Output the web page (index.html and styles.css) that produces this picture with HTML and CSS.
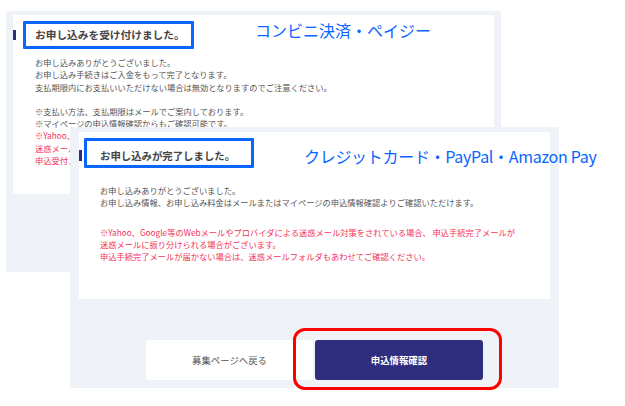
FILE: index.html
```html
<!DOCTYPE html>
<html lang="ja">
<head>
<meta charset="utf-8">
<title>お申し込み完了</title>
<link rel="stylesheet" href="styles.css">
</head>
<body>
<div class="canvas">
  <section class="window window-back">
    <div class="card">
      <h2 class="heading">お申し込みを受け付けました。</h2>
      <div class="body">
        <p class="para">お申し込みありがとうございました。<br>お申し込み手続きはご入金をもって完了となります。<br>支払期限内にお支払いいただけない場合は無効となりますのでご注意ください。</p>
        <p class="para gap-s">※支払い方法、支払期限はメールでご案内しております。<br>※マイページの申込情報確認からもご確認可能です。<br><span class="red">※Yahoo、Google等のWebメールやプロバイダによる迷惑メール対策をされている場合、申込受付メールが<br>迷惑メールに振り分けられる場合がございます。<br>申込受付メールが届かない場合は、迷惑メールフォルダもあわせてご確認ください。</span></p>
      </div>
    </div>
  </section>

  <section class="window window-front">
    <div class="card card-front">
      <h2 class="heading heading-front">お申し込みが完了しました。</h2>
      <div class="body body-front">
        <p class="para">お申し込みありがとうございました。<br>お申し込み情報、お申し込み料金はメールまたはマイページの申込情報確認よりご確認いただけます。</p>
        <p class="para red gap-l">※Yahoo、Google等のWebメールやプロバイダによる迷惑メール対策をされている場合、 申込手続完了メールが<br>迷惑メールに振り分けられる場合がございます。<br>申込手続完了メールが届かない場合は、迷惑メールフォルダもあわせてご確認ください。</p>
      </div>
    </div>
    <div class="actions">
      <button class="btn btn-back">募集ページへ戻る</button>
      <button class="btn btn-primary">申込情報確認</button>
    </div>
  </section>

  <div class="mark mark-1"></div>
  <div class="mark mark-2"></div>
  <div class="label label-1">コンビニ決済・ペイジー</div>
  <div class="label label-2">クレジットカード・PayPal・Amazon Pay</div>
  <div class="ring"></div>
</div>
</body>
</html>
```

FILE: styles.css
```css
* { box-sizing: border-box; }
html, body { margin: 0; padding: 0; background: #fff; }
body {
  font-family: "Noto Sans CJK JP", "Noto Sans", sans-serif;
  color: #555;
}
.canvas { position: relative; width: 625px; height: 406px; overflow: hidden; }

.window {
  position: absolute;
  background: #eff2f6;
  height: 261px;
}
.window-back { left: 6px; top: 11px; width: 495px; padding: 4px 7px 0; }
.window-front { left: 70px; top: 127px; width: 489px; padding: 5px 9px 0; }

.card { background: #fff; height: 179px; padding-top: 15px; }
.card-front { height: 167px; padding-top: 18px; }

.heading {
  margin: 0;
  border-left: 3px solid #2e2d7e;
  padding-left: 19px;
  font-size: 10.7px;
  line-height: 10px;
  height: 10px;
  font-weight: 700;
  color: #444;
  letter-spacing: 0;
  white-space: nowrap;
}
.heading-front { padding-left: 18px; font-size: 10.4px; height: 11px; line-height: 11px; }

.body { padding-left: 22px; margin-top: 16px; }
.body-front { padding-left: 21px; margin-top: 23px; }

.para {
  margin: 0;
  font-size: 8.25px;
  line-height: 12.3px;
  white-space: nowrap;
}
.gap-s { margin-top: 12px; }
.gap-l { margin-top: 17px; }
.red { color: #f5325a; }

.actions {
  display: flex;
  justify-content: center;
  gap: 2px;
  margin-top: 41px;
}
.btn {
  width: 167px;
  height: 40px;
  border: none;
  border-radius: 3px;
  font-family: "Noto Sans CJK JP", sans-serif;
  font-size: 9.4px;
  padding: 0;
}
.btn-back { background: #fff; color: #555; }
.btn-primary { width: 168px; background: #2e2d7e; color: #fff; font-weight: 700; }

.mark {
  position: absolute;
  border: 3px solid #0a66ff;
  border-radius: 1px;
}
.mark-1 { left: 23px; top: 21px; width: 171px; height: 28px; }
.mark-2 { left: 84px; top: 138px; width: 170px; height: 30px; }

.label {
  position: absolute;
  color: #0a64ff;
  font-size: 16px;
  line-height: 20px;
  white-space: nowrap;
}
.label-1 { left: 255px; top: 20px; }
.label-2 { left: 304px; top: 146px; letter-spacing: -0.3px; }

.ring {
  position: absolute;
  left: 293px;
  top: 328px;
  width: 209px;
  height: 62px;
  border: 3px solid #ff0000;
  border-radius: 12px;
}
```
